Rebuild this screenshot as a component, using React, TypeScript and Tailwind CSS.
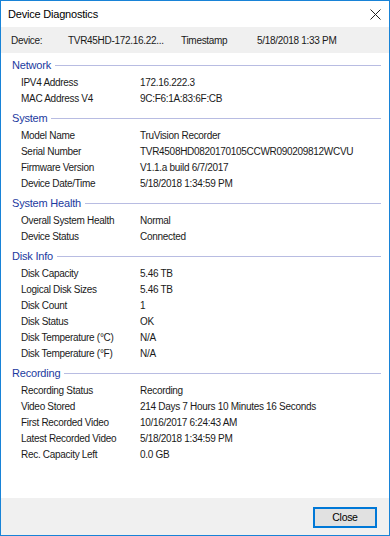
type Row = { label: string; value: string };
type Section = { title: string; rows: Row[] };

const sections: Section[] = [
  {
    title: "Network",
    rows: [
      { label: "IPV4 Address", value: "172.16.222.3" },
      { label: "MAC Address V4", value: "9C:F6:1A:83:6F:CB" },
    ],
  },
  {
    title: "System",
    rows: [
      { label: "Model Name", value: "TruVision Recorder" },
      { label: "Serial Number", value: "TVR4508HD0820170105CCWR090209812WCVU" },
      { label: "Firmware Version", value: "V1.1.a build 6/7/2017" },
      { label: "Device Date/Time", value: "5/18/2018 1:34:59 PM" },
    ],
  },
  {
    title: "System Health",
    rows: [
      { label: "Overall System Health", value: "Normal" },
      { label: "Device Status", value: "Connected" },
    ],
  },
  {
    title: "Disk Info",
    rows: [
      { label: "Disk Capacity", value: "5.46 TB" },
      { label: "Logical Disk Sizes", value: "5.46 TB" },
      { label: "Disk Count", value: "1" },
      { label: "Disk Status", value: "OK" },
      { label: "Disk Temperature (°C)", value: "N/A" },
      { label: "Disk Temperature (°F)", value: "N/A" },
    ],
  },
  {
    title: "Recording",
    rows: [
      { label: "Recording Status", value: "Recording" },
      { label: "Video Stored", value: "214 Days 7 Hours 10 Minutes 16 Seconds" },
      { label: "First Recorded Video", value: "10/16/2017 6:24:43 AM" },
      { label: "Latest Recorded Video", value: "5/18/2018 1:34:59 PM" },
      { label: "Rec. Capacity Left", value: "0.0 GB" },
    ],
  },
];

const App: React.FC = () => {
  return (
    <div
      className="w-[390px] h-[536px] flex flex-col border border-[#1883d7] bg-white text-[10px] tracking-[-0.3px] text-[#1a1a1a]"
      style={{ fontFamily: '"Liberation Sans", Arial, sans-serif' }}
    >
      <div className="h-[26px] flex items-center justify-between pl-[7px] pr-[7px]">
        <span className="text-[11px] tracking-[-0.2px] text-black">Device Diagnostics</span>
        <svg width="11" height="11" viewBox="0 0 11 11" className="mr-[1px]">
          <path d="M0.5 0.5 L10.5 10.5 M10.5 0.5 L0.5 10.5" stroke="#222" strokeWidth="1" />
        </svg>
      </div>

      <div className="h-[26px] flex items-center bg-[#f0f0f0] pl-[10px]">
        <span className="w-[57px]">Device:</span>
        <span className="w-[113px]">TVR45HD-172.16.22...</span>
        <span className="w-[76px]">Timestamp</span>
        <span>5/18/2018 1:33 PM</span>
      </div>

      <div className="flex-1 flex flex-col gap-[3px] pt-[3px]">
        {sections.map((section) => (
          <div key={section.title} className="flex flex-col">
            <div className="h-[18px] flex items-center pl-[11px] pr-[8px]">
              <span className="text-[11px] tracking-[-0.2px] text-[#1c3aa0]">{section.title}</span>
              <div className="flex-1 h-px bg-[#b8bce2] ml-[4px]" />
            </div>
            {section.rows.map((row) => (
              <div key={row.label} className="h-4 flex items-center pl-5">
                <span className="w-[119px]">{row.label}</span>
                <span>{row.value}</span>
              </div>
            ))}
          </div>
        ))}
      </div>

      <div className="h-[37px] bg-[#f0f0f0] flex justify-end items-start pt-[9px] pr-3">
        <button className="w-[64px] h-[21px] border-2 border-[#0078d7] bg-[#e1e1e1] text-[10.5px] text-black flex items-center justify-center">
          Close
        </button>
      </div>
    </div>
  );
};

export default App;
